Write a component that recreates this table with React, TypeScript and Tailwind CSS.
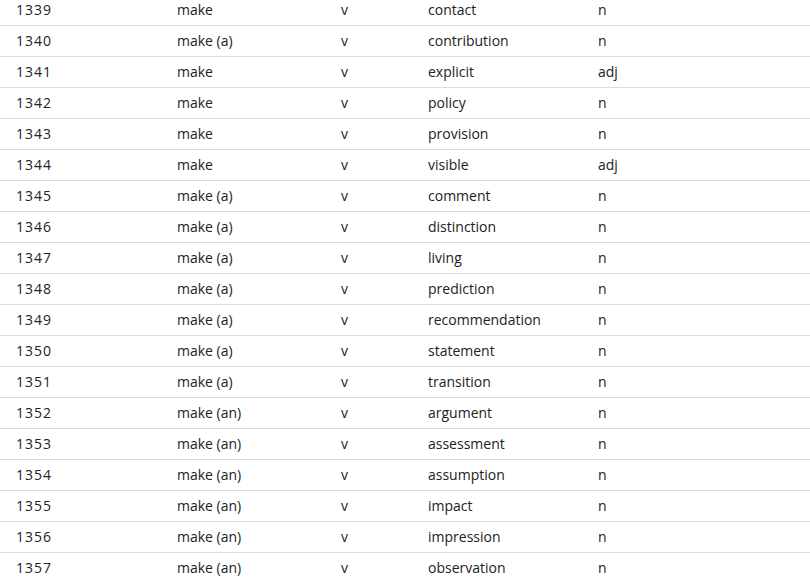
import React from 'react';

// 語彙リスト（コロケーション）
const rows: [number, string, string, string, string][] = [
  [1339, 'make', 'v', 'contact', 'n'],
  [1340, 'make (a)', 'v', 'contribution', 'n'],
  [1341, 'make', 'v', 'explicit', 'adj'],
  [1342, 'make', 'v', 'policy', 'n'],
  [1343, 'make', 'v', 'provision', 'n'],
  [1344, 'make', 'v', 'visible', 'adj'],
  [1345, 'make (a)', 'v', 'comment', 'n'],
  [1346, 'make (a)', 'v', 'distinction', 'n'],
  [1347, 'make (a)', 'v', 'living', 'n'],
  [1348, 'make (a)', 'v', 'prediction', 'n'],
  [1349, 'make (a)', 'v', 'recommendation', 'n'],
  [1350, 'make (a)', 'v', 'statement', 'n'],
  [1351, 'make (a)', 'v', 'transition', 'n'],
  [1352, 'make (an)', 'v', 'argument', 'n'],
  [1353, 'make (an)', 'v', 'assessment', 'n'],
  [1354, 'make (an)', 'v', 'assumption', 'n'],
  [1355, 'make (an)', 'v', 'impact', 'n'],
  [1356, 'make (an)', 'v', 'impression', 'n'],
  [1357, 'make (an)', 'v', 'observation', 'n'],
];

const App: React.FC = () => {
  return (
    <div className="h-[579px] w-[810px] overflow-hidden bg-white font-['Open_Sans',sans-serif] text-[14px] text-[#222]">
      <div className="-mt-[5px]">
        {rows.map(([id, verb, pos1, word, pos2], i) => (
          <div
            key={id}
            className={`grid h-[31px] grid-cols-[177px_164px_87px_170px_1fr] items-center pb-[2px] ${
              i < rows.length - 1 ? 'border-b border-[#dcdcdc]' : ''
            }`}
          >
            <div className="pl-[16px] tracking-[1px]">{id}</div>
            <div>{verb}</div>
            <div>{pos1}</div>
            <div>{word}</div>
            <div>{pos2}</div>
          </div>
        ))}
      </div>
    </div>
  );
};

export default App;
